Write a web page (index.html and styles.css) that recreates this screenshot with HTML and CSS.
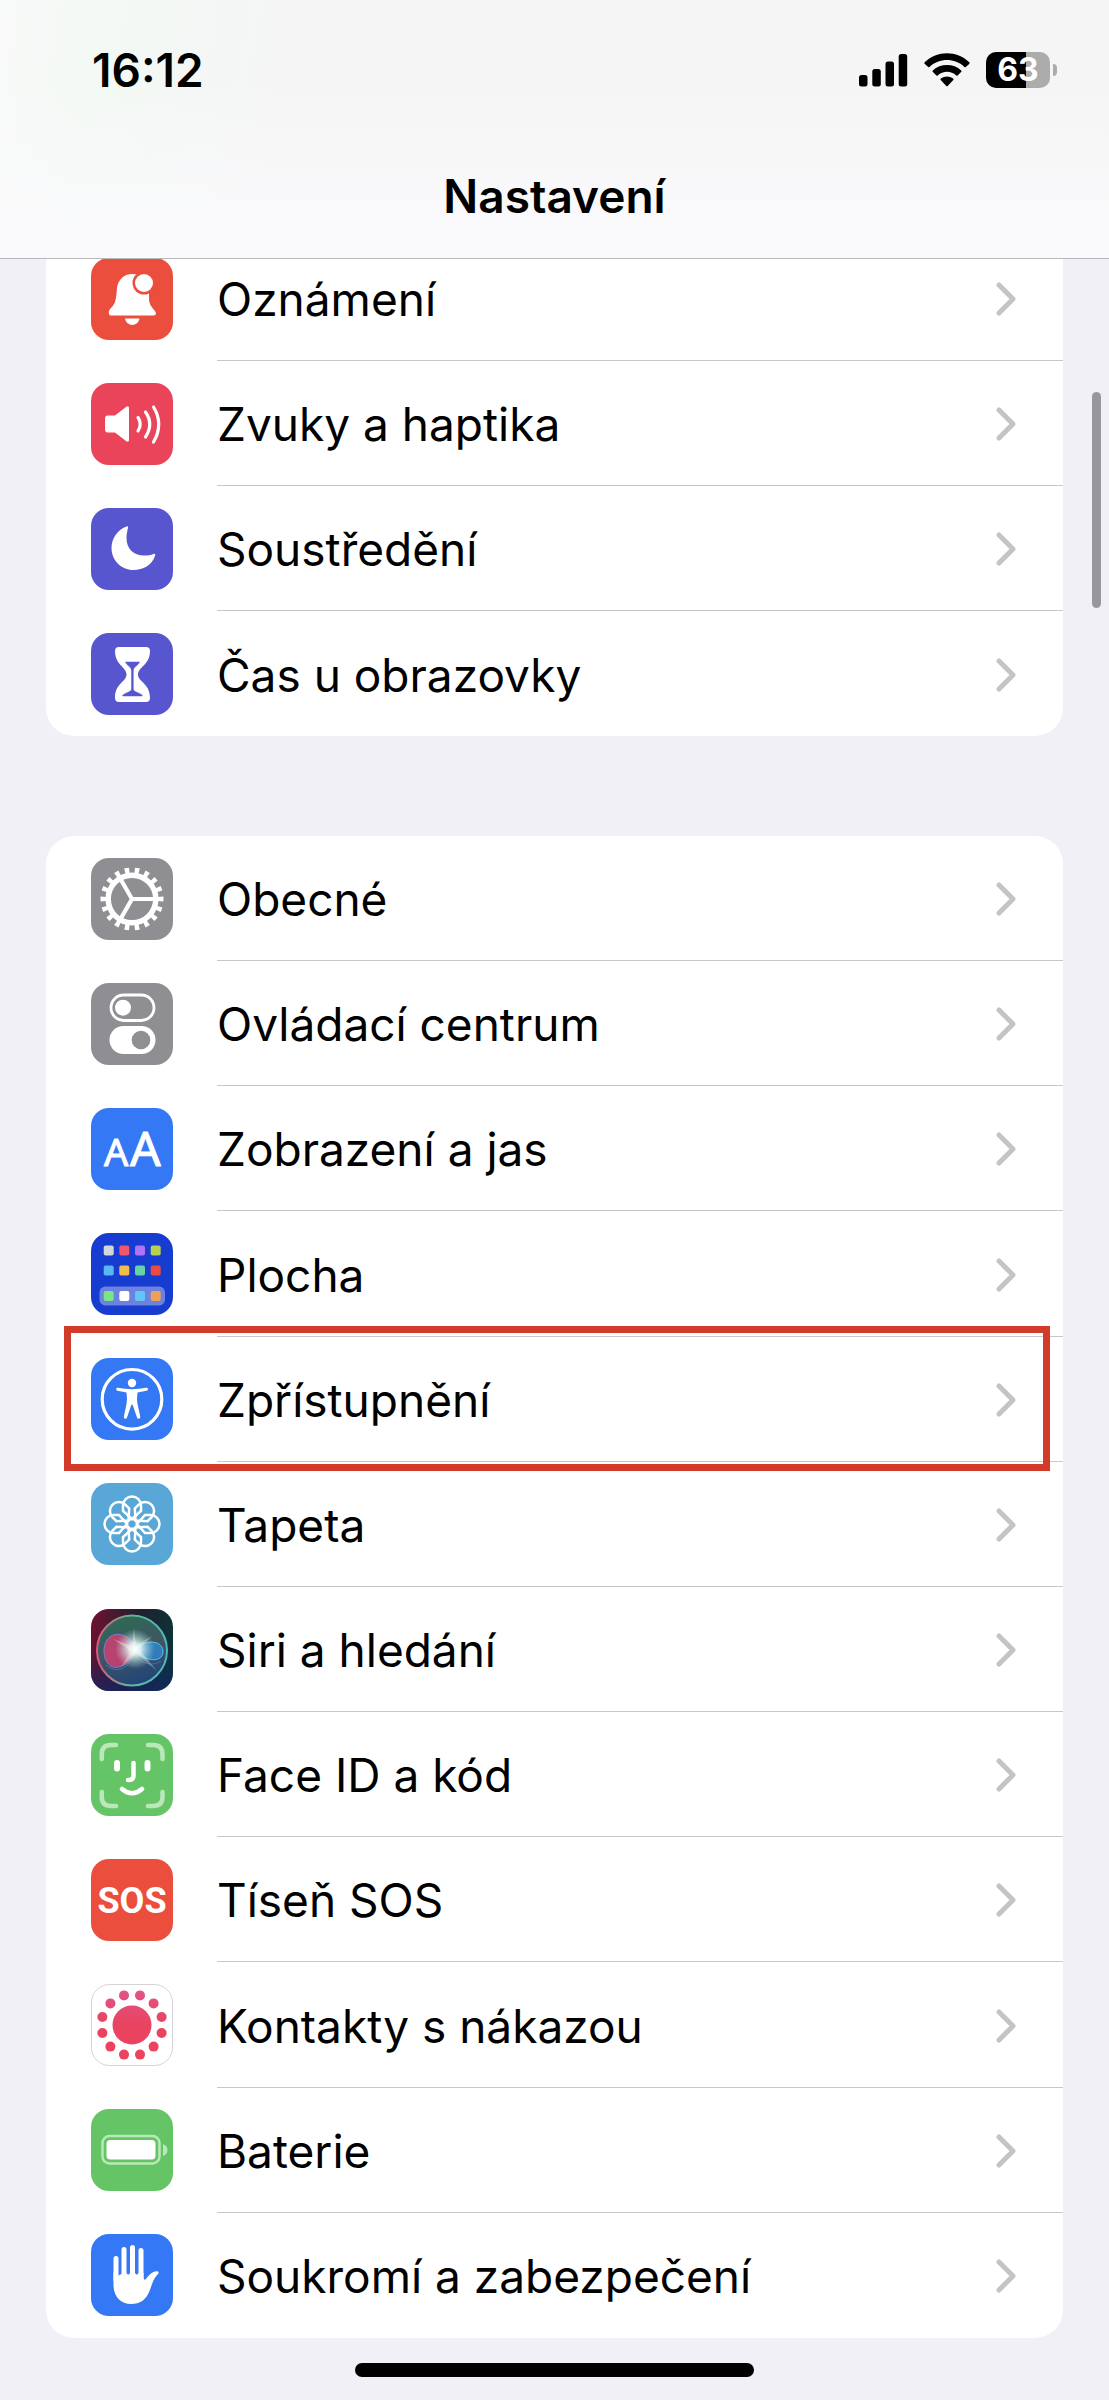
FILE: index.html
```html
<!DOCTYPE html>
<html lang="cs">
  <head>
    <meta charset="UTF-8" />
    <meta name="viewport" content="width=device-width, initial-scale=1.0" />
    <title>Nastavení</title>
    <link rel="stylesheet" href="styles.css">
  </head>
  <body>
    <header class="header">
      <div class="status">
        <time class="clock">16:12</time>
        <div class="indicators">
          <svg width="49" height="34" viewBox="0 0 49 34" aria-hidden="true">
            <rect x="0" y="22" width="8.5" height="11.5" rx="2.5" />
            <rect x="13.3" y="16" width="8.5" height="17.5" rx="2.5" />
            <rect x="26.5" y="8.5" width="8.5" height="25" rx="2.5" />
            <rect x="39.7" y="1" width="8.5" height="32.5" rx="2.5" />
          </svg>
          <svg width="46" height="34" viewBox="0 0 46 34" aria-hidden="true">
            <path d="M0.6 10.8 Q0 10 0.7 9.3 C13 -2.8 33 -2.8 45.3 9.3 Q46 10 45.4 10.8 L41.8 14 Q41.2 14.4 40.5 13.9 C30.5 4.8 15.5 4.8 5.5 13.9 Q4.8 14.4 4.2 14 Z" />
            <path d="M8.7 18.8 Q8.1 18.2 8.8 17.5 C16.5 10.3 29.5 10.3 37.2 17.5 Q37.9 18.2 37.3 18.8 L33.6 22.4 Q33 22.9 32.3 22.4 C27 17.6 19 17.6 13.7 22.4 Q13 22.9 12.4 22.4 Z" />
            <path d="M16.7 26.9 Q16 26.3 16.9 25.6 C20.5 22.7 25.5 22.7 29.1 25.6 Q30 26.3 29.3 26.9 L23.7 33 Q23 33.7 22.3 33 Z" />
          </svg>
          <div class="charge">
            <span class="charge-level">63</span>
            <span class="charge-tip"></span>
          </div>
        </div>
      </div>
      <h1>Nastavení</h1>
    </header>

    <main>
      <nav class="card">
        <a class="row" href="#oznameni">
          <svg class="icon" viewBox="0 0 82 82" aria-hidden="true">
            <rect width="82" height="82" rx="18" fill="#eb4e3d" />
            <path d="M41 16 C33 16 27 22 26 30 C25 41 25 45 20 50 Q17 53 18 56 Q18.5 57.5 20 57.5 H63 Q65 57 65 55.5 C65 52 58 49 58 41 V30 L48 16.5 Z" fill="#fff" />
            <circle cx="53" cy="25" r="11.5" fill="#eb4e3d" />
            <circle cx="53" cy="25" r="9" fill="#fff" />
            <path d="M34 60.5 H48.5 C47 69 35.5 69 34 60.5 Z" fill="#fff" />
          </svg>
          <span class="label">Oznámení</span>
        </a>
        <a class="row" href="#zvuky">
          <svg class="icon" viewBox="0 0 82 82" aria-hidden="true">
            <rect width="82" height="82" rx="18" fill="#ea445a" />
            <path d="M17 32.5 H24 L35 24 Q38 22 38 25.5 V56.5 Q38 60 35 58 L24 49.5 H17 Q14 49.5 14 46.5 V35.5 Q14 32.5 17 32.5 Z" fill="#fff" />
            <g fill="none" stroke="#fff" stroke-width="3.2" stroke-linecap="round">
              <path d="M47 34.5 Q51.5 41 47 48" />
              <path d="M54.5 29 Q63 41 54.5 54" />
              <path d="M62.5 24 Q73 41 62.5 59" />
            </g>
          </svg>
          <span class="label">Zvuky a haptika</span>
        </a>
        <a class="row" href="#soustredeni">
          <svg class="icon" viewBox="0 0 82 82" aria-hidden="true">
            <rect width="82" height="82" rx="18" fill="#5856ce" />
            <path d="M35.5 18.5 C26 22 20.5 31 20.5 40 C20.5 52 30 62 42.5 62 C52 62 61 57 64 48 C64.7 46.5 64 45.5 62.5 46 C60 47 57 47.5 53 47.5 C42.5 47.5 35.5 40.5 35.5 30 C35.5 26 36.5 22 37 20 C37.3 18.6 36.5 18 35.5 18.5 Z" fill="#fff" />
          </svg>
          <span class="label">Soustředění</span>
        </a>
        <a class="row" href="#cas">
          <svg class="icon" viewBox="0 0 82 82" aria-hidden="true">
            <rect width="82" height="82" rx="18" fill="#5856ce" />
            <path d="M28 14 H55 Q59 14 59 18 C59 32 47 34 47 41.5 C47 49 59 50 59 65 Q59 69 55 69 H28 Q24 69 24 65 C24 50 35.5 49 35.5 41.5 C35.5 34 24 32 24 18 Q24 14 28 14 Z" fill="#fff" />
            <path d="M34.5 29 H48.5 C47 33 42.300 33.5 42.300 38 V56 C42.300 59.5 50 59.500 51.5 63 H31.5 C33 59.500 40.500 59.5 40.500 56 V38 C40.500 33.5 36 33 34.5 29 Z" fill="#5856ce" stroke="#5856ce" stroke-width="0.500" />
          </svg>
          <span class="label">Čas u obrazovky</span>
        </a>
      </nav>

      <nav class="card card-main">
        <a class="row" href="#obecne">
          <svg class="icon" viewBox="0 0 82 82" aria-hidden="true">
            <rect width="82" height="82" rx="18" fill="#8e8e93" />
            <g fill="none" stroke="#fff">
              <circle cx="41" cy="41" r="23.8" stroke-width="5.5" />
              <circle cx="41" cy="41" r="28.5" stroke-width="6" pathLength="360" stroke-dasharray="9 11" stroke-dashoffset="4.5" />
              <path d="M41 41 H64 M41 41 L29.5 21 M41 41 L29.5 61" stroke-width="4.2" />
            </g>
          </svg>
          <span class="label">Obecné</span>
        </a>
        <a class="row" href="#ovladaci-centrum">
          <svg class="icon" viewBox="0 0 82 82" aria-hidden="true">
            <rect width="82" height="82" rx="18" fill="#8e8e93" />
            <rect x="20" y="12" width="43" height="25.5" rx="12.7" fill="none" stroke="#fff" stroke-width="2.8" />
            <circle cx="32" cy="24.7" r="8" fill="#fff" />
            <rect x="18.5" y="43" width="46" height="28" rx="14" fill="#fff" />
            <circle cx="50" cy="57" r="9.3" fill="#8e8e93" />
          </svg>
          <span class="label">Ovládací centrum</span>
        </a>
        <a class="row" href="#zobrazeni">
          <svg class="icon" viewBox="0 0 82 82" aria-hidden="true">
            <rect width="82" height="82" rx="18" fill="#3478f6" />
            <text class="glyph-aa" x="13" y="58" font-size="38">A</text>
            <text class="glyph-aa" x="39" y="58" font-size="48">A</text>
          </svg>
          <span class="label">Zobrazení a jas</span>
        </a>
        <a class="row" href="#plocha">
          <svg class="icon" viewBox="0 0 82 82" aria-hidden="true">
            <rect width="82" height="82" rx="18" fill="#173dd0" />
            <rect x="8.5" y="53.5" width="65.5" height="19" rx="6" fill="#6b82de" />
            <rect x="12.7" y="12.5" width="10" height="10" rx="2" fill="#d5d6dc" />
            <rect x="28.3" y="12.5" width="10" height="10" rx="2" fill="#f0566c" />
            <rect x="44" y="12.5" width="10" height="10" rx="2" fill="#b073f8" />
            <rect x="59.7" y="12.5" width="10" height="10" rx="2" fill="#b8d04f" />
            <rect x="12.7" y="32.5" width="10" height="10" rx="2" fill="#58b8f4" />
            <rect x="28.3" y="32.5" width="10" height="10" rx="2" fill="#f4bd4b" />
            <rect x="44" y="32.5" width="10" height="10" rx="2" fill="#66d3a6" />
            <rect x="59.7" y="32.5" width="10" height="10" rx="2" fill="#ef4a40" />
            <rect x="12.7" y="58" width="10" height="10" rx="2" fill="#7be584" />
            <rect x="28.3" y="58" width="10" height="10" rx="2" fill="#fff" />
            <rect x="44" y="58" width="10" height="10" rx="2" fill="#62c5fa" />
            <rect x="59.7" y="58" width="10" height="10" rx="2" fill="#f0a05a" />
          </svg>
          <span class="label">Plocha</span>
        </a>
        <a class="row marked" href="#zpristupneni">
          <svg class="icon" viewBox="0 0 82 82" aria-hidden="true">
            <rect width="82" height="82" rx="18" fill="#3478f6" />
            <circle cx="41" cy="41.3" r="29.8" fill="none" stroke="#fff" stroke-width="3.2" />
            <circle cx="41" cy="25" r="4.2" fill="#fff" />
            <path d="M27 29.8 Q41 32.5 55 29.8 Q57 29.6 57 31.2 Q57 32.3 55.5 32.7 L46.5 34.6 Q45.5 41 46.5 46 L49.3 58.5 Q49.5 60.5 48 60.8 Q46.5 61 46 59.5 L41.7 47 Q41 46 40.3 47 L36 59.5 Q35.5 61 34 60.8 Q32.5 60.5 32.9 58.5 L35.5 46 Q36.5 41 35.5 34.6 L26.5 32.7 Q25.2 32.3 25.2 31.2 Q25.2 29.6 27 29.8 Z" fill="#fff" />
          </svg>
          <span class="label">Zpřístupnění</span>
        </a>
        <a class="row" href="#tapeta">
          <svg class="icon" viewBox="0 0 82 82" aria-hidden="true">
            <defs>
              <path id="petal" d="M0 -5 L-9 -13 V-18.5 A9 9 0 0 1 9 -18.5 V-13 Z" />
            </defs>
            <rect width="82" height="82" rx="18" fill="#59a7d7" />
            <g transform="translate(41 41)" fill="none" stroke="#fff" stroke-width="2.5">
              <use href="#petal" />
              <use href="#petal" transform="rotate(45)" />
              <use href="#petal" transform="rotate(90)" />
              <use href="#petal" transform="rotate(135)" />
              <use href="#petal" transform="rotate(180)" />
              <use href="#petal" transform="rotate(225)" />
              <use href="#petal" transform="rotate(270)" />
              <use href="#petal" transform="rotate(315)" />
              <circle r="5" />
            </g>
          </svg>
          <span class="label">Tapeta</span>
        </a>
        <a class="row" href="#siri">
          <svg class="icon" viewBox="0 0 82 82" aria-hidden="true">
            <defs>
              <linearGradient id="siri-bg" x1="0" y1="0.3" x2="1" y2="0.5">
                <stop offset="0" stop-color="#6b1232" />
                <stop offset="0.5" stop-color="#20202f" />
                <stop offset="1" stop-color="#0c3438" />
              </linearGradient>
              <linearGradient id="siri-low" x1="0" y1="0" x2="0" y2="1">
                <stop offset="0.55" stop-color="#14246a" stop-opacity="0" />
                <stop offset="1" stop-color="#14246a" stop-opacity="0.7" />
              </linearGradient>
              <linearGradient id="siri-orb" x1="0.3" y1="0" x2="0.6" y2="1">
                <stop offset="0" stop-color="#2c6b52" />
                <stop offset="0.5" stop-color="#3f5563" />
                <stop offset="1" stop-color="#1f4479" />
              </linearGradient>
              <linearGradient id="siri-ring" x1="0" y1="0" x2="1" y2="0">
                <stop offset="0" stop-color="#e0567e" />
                <stop offset="0.5" stop-color="#5fb79a" />
                <stop offset="1" stop-color="#4fb5bd" />
              </linearGradient>
              <radialGradient id="siri-glow">
                <stop offset="0" stop-color="#fff" />
                <stop offset="0.3" stop-color="#e8fff8" stop-opacity="0.85" />
                <stop offset="1" stop-color="#9fd8d8" stop-opacity="0" />
              </radialGradient>
            </defs>
            <rect width="82" height="82" rx="18" fill="url(#siri-bg)" />
            <rect width="82" height="82" rx="18" fill="url(#siri-low)" />
            <circle cx="41" cy="41.5" r="35" fill="url(#siri-orb)" stroke="url(#siri-ring)" stroke-width="2" />
            <path d="M46 42 C38 20 15 20 13 40 C12 62 32 66 46 42 Z" fill="#d83f72" fill-opacity="0.8" stroke="#7b7ad8" stroke-width="1" />
            <path d="M42 41 C55 30 70 31 72 41 C73 53 58 55 42 41 Z" fill="#2f87cf" fill-opacity="0.8" stroke="#5cc0ea" stroke-width="1" />
            <path d="M15 56 C28 66 38 58 44 44 C50 55 60 58 70 52" fill="none" stroke="#4f8fd6" stroke-opacity="0.6" />
            <circle cx="44" cy="40" r="20" fill="url(#siri-glow)" />
            <path d="M43 19 L45 36 L61 27 L48 40 L66 62 L45 44 L30 58 L40 42 L22 30 L41 37 Z" fill="#fff" fill-opacity="0.3" />
          </svg>
          <span class="label">Siri a hledání</span>
        </a>
        <a class="row" href="#face-id">
          <svg class="icon" viewBox="0 0 82 82" aria-hidden="true">
            <rect width="82" height="82" rx="18" fill="#65c466" />
            <g fill="none" stroke-linecap="round">
              <path d="M10.8 25 V20 Q10.8 11 20 11 H25 M57 11 H62 Q71.5 11 71.5 20 V25 M71.5 58 V63 Q71.5 72 62 72 H57 M25 72 H20 Q10.8 72 10.8 63 V58" stroke="#b9e9b9" stroke-width="4.5" />
              <path d="M26 29 V34.5 M56.5 29 V34.5" stroke="#fff" stroke-width="6" />
              <path d="M42.5 29 V42 Q42.5 46 37 46 M31 55 Q41 63.5 51 55" stroke="#fff" stroke-width="4.5" />
            </g>
          </svg>
          <span class="label">Face ID a kód</span>
        </a>
        <a class="row" href="#sos">
          <svg class="icon" viewBox="0 0 82 82" aria-hidden="true">
            <rect width="82" height="82" rx="18" fill="#eb4e3d" />
            <text class="glyph-sos" x="41" y="54" text-anchor="middle">SOS</text>
          </svg>
          <span class="label">Tíseň SOS</span>
        </a>
        <a class="row" href="#kontakty">
          <svg class="icon" viewBox="0 0 82 82" aria-hidden="true">
            <defs>
              <linearGradient id="exposure" gradientUnits="userSpaceOnUse" x1="0" y1="5" x2="0" y2="77">
                <stop offset="0" stop-color="#e0568a" />
                <stop offset="0.5" stop-color="#e9435f" />
                <stop offset="1" stop-color="#ea4360" />
              </linearGradient>
            </defs>
            <rect x="0.5" y="0.5" width="81" height="81" rx="18" fill="#fff" stroke="#d4d4d8" />
            <g fill="url(#exposure)">
              <circle cx="41" cy="41" r="19.5" />
              <circle cx="49" cy="11.4" r="5" />
              <circle cx="62.6" cy="19.4" r="5" />
              <circle cx="70.6" cy="33" r="5" />
              <circle cx="70.6" cy="49" r="5" />
              <circle cx="62.6" cy="62.6" r="5" />
              <circle cx="49" cy="70.6" r="5" />
              <circle cx="33" cy="70.6" r="5" />
              <circle cx="19.4" cy="62.6" r="5" />
              <circle cx="11.4" cy="49" r="5" />
              <circle cx="11.4" cy="33" r="5" />
              <circle cx="19.4" cy="19.4" r="5" />
              <circle cx="33" cy="11.4" r="5" />
            </g>
          </svg>
          <span class="label">Kontakty s nákazou</span>
        </a>
        <a class="row" href="#baterie">
          <svg class="icon" viewBox="0 0 82 82" aria-hidden="true">
            <rect width="82" height="82" rx="18" fill="#65c466" />
            <rect x="11.5" y="27" width="57" height="27.5" rx="7" fill="none" stroke="#b9e9b9" stroke-width="2.5" />
            <rect x="15.5" y="31" width="49" height="19.5" rx="4" fill="#fff" />
            <path d="M72 35 Q76.5 37 76.5 41 Q76.5 45 72 47 Z" fill="#b9e9b9" />
          </svg>
          <span class="label">Baterie</span>
        </a>
        <a class="row" href="#soukromi">
          <svg class="icon" viewBox="0 0 82 82" aria-hidden="true">
            <rect width="82" height="82" rx="18" fill="#3478f6" />
            <path d="M25 24.5 V46 M33 15.5 V44 M41.5 13.5 V44 M50 16.5 V46" fill="none" stroke="#fff" stroke-width="5" stroke-linecap="round" />
            <path d="M22.5 38 L26 42 L30.5 40 Q33 42 35.5 39 Q37.5 42 39 39 Q41.5 42 44 39 Q46 42 47.5 39 L52.5 39 V44.5 Q53.5 46.5 55 45 C58 41 62 36.5 67 37.5 Q68.5 38.5 66.5 40.5 C62 45 61 51 58.5 57 C55 66 49 70 40 70 C30 70 22.5 63 22.5 51 Z" fill="#fff" />
          </svg>
          <span class="label">Soukromí a zabezpečení</span>
        </a>
      </nav>
    </main>

    <footer class="home">
      <div class="home-bar"></div>
    </footer>
    <div class="scrollbar"></div>
  </body>
</html>
```
FILE: styles.css
```css
* {
  margin: 0;
  padding: 0;
  box-sizing: border-box;
}

body {
  font-family: "Inter", "Liberation Sans", sans-serif;
  font-size: 46px;
  line-height: 60px;
  background: #f1f0f6;
  color: #000;
  min-height: 100vh;
  display: flex;
  flex-direction: column;
  position: relative;
}

.header {
  position: relative;
  z-index: 1;
  background: linear-gradient(rgba(250, 250, 252, 0) 30%, #fafafc 90%),
    linear-gradient(100deg, #f9faf9 0%, #f3f9f4 10%, #f5f5f6 25%);
  border-bottom: 1px solid #b9b9be;
  padding-bottom: 32px;
}

.status {
  display: flex;
  justify-content: space-between;
  align-items: center;
  padding: 40px 52px 0 92px;
  margin-bottom: 66px;
}

.clock {
  font-weight: 600;
}

.indicators {
  display: flex;
  align-items: center;
  gap: 16px;
}

.charge {
  display: flex;
  align-items: center;
  gap: 3px;
}

.charge-level {
  width: 64px;
  height: 36px;
  border-radius: 10px;
  background: linear-gradient(to right, #000 63%, #acacac 63%);
  color: #fff;
  font-size: 32px;
  font-weight: 700;
  line-height: 36px;
  text-align: center;
}

.charge-tip {
  width: 4px;
  height: 12px;
  border-radius: 0 4px 4px 0;
  background: #acacac;
}

h1 {
  font-size: 46px;
  font-weight: 600;
  text-align: center;
}

main {
  flex: 1;
  display: flex;
  flex-direction: column;
  gap: 100px;
  margin-top: -23px;
  padding: 0 46px;
}

.card {
  display: grid;
  grid-auto-rows: minmax(125px, 1fr);
  background: #fff;
  border-radius: 28px;
}

.card-main {
  flex: 1;
}

.row {
  position: relative;
  display: flex;
  align-items: center;
  gap: 44px;
  padding-left: 45px;
  color: inherit;
  text-decoration: none;
}

.icon {
  flex: none;
  width: 82px;
  height: 82px;
}

.label {
  flex: 1;
  align-self: stretch;
  display: flex;
  justify-content: space-between;
  align-items: center;
  padding: 2px 46px 0 0;
  border-bottom: 1px solid #c8c8cb;
}

.row:last-child .label {
  border-bottom: none;
}

.label::after {
  content: "";
  width: 22px;
  height: 34px;
  background: url("data:image/svg+xml,%3Csvg xmlns='http://www.w3.org/2000/svg' viewBox='0 0 22 34' fill='none' stroke='%23c4c4c7' stroke-width='5' stroke-linecap='round' stroke-linejoin='round'%3E%3Cpath d='M4 3L18 17L4 31'/%3E%3C/svg%3E");
}

.glyph-aa {
  font-family: "Noto Sans", sans-serif;
  fill: #fff;
  stroke: #fff;
  stroke-linejoin: round;
}

.glyph-sos {
  font-family: "Roboto", sans-serif;
  font-size: 36px;
  font-weight: 700;
  fill: #fff;
}

/* red frame around the highlighted row */
.marked::after {
  content: "";
  position: absolute;
  top: -11px;
  right: 13px;
  bottom: -9px;
  left: 18px;
  border: 7px solid #d23b29;
}

.home {
  display: flex;
  justify-content: center;
  align-items: center;
  height: 62px;
  padding-top: 2px;
}

.home-bar {
  width: 36%;
  height: 14px;
  border-radius: 7px;
  background: #000;
}

.scrollbar {
  position: absolute;
  top: 392px;
  right: 8px;
  width: 9px;
  height: 216px;
  border-radius: 5px;
  background: #98989c;
}
```
